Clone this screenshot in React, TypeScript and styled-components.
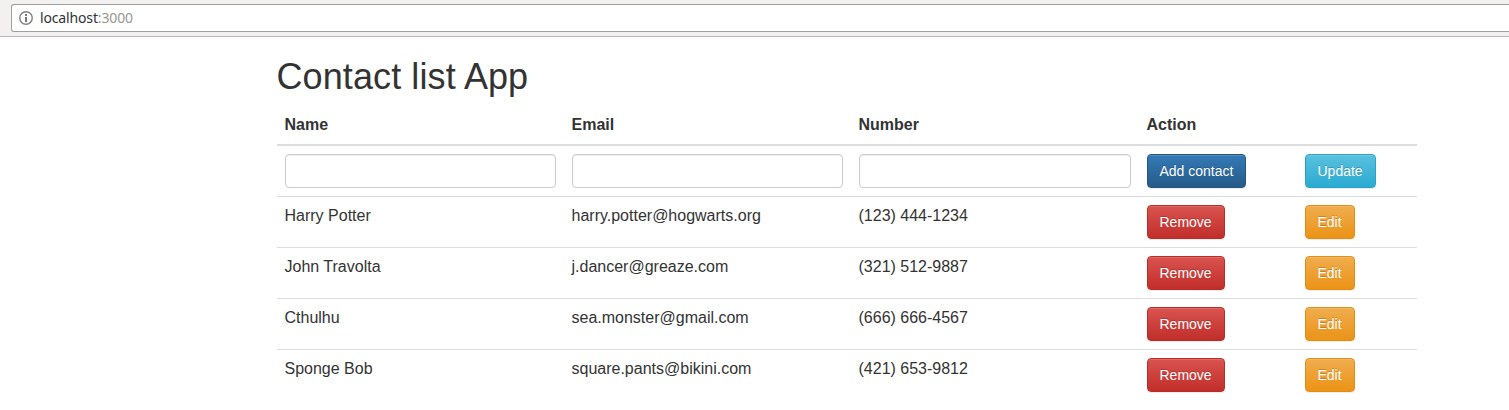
import React from "react";
import styled, { createGlobalStyle } from "styled-components";

const GlobalStyle = createGlobalStyle`
  *, *::before, *::after { box-sizing: border-box; }
  html, body { margin: 0; background: #fff; }
  body {
    height: 410px;
    overflow: hidden;
    font-family: "Liberation Sans", Arial, sans-serif;
    font-size: 16px;
    line-height: 22px;
    color: #333;
  }
`;

const BrowserBar = styled.div`
  height: 37px;
  padding: 4px 0 0 11px;
  background: #f2f1f0;
  border-bottom: 1px solid #b6b6bb;
`;

const AddressField = styled.div`
  display: flex;
  align-items: center;
  height: 28px;
  padding-left: 7px;
  background: #fff;
  border: 1px solid #a0a0a0;
  border-right: 0;
  border-radius: 3px 0 0 3px;
`;

const InfoIcon = styled.svg`
  display: block;
  width: 14px;
  height: 14px;
  margin-right: 7px;
`;

const Address = styled.span`
  font-family: "Noto Sans", sans-serif;
  font-size: 14px;
  line-height: 20px;
  letter-spacing: -0.15px;
  color: #2e3436;
`;

const Port = styled.span`
  color: #9a9690;
`;

const Container = styled.main`
  width: 1140px;
  margin-left: 276.5px;
  padding-top: 20px;
`;

const Title = styled.h1`
  margin: 0 0 10px;
  font-size: 36px;
  font-weight: 500;
  line-height: 39px;
  letter-spacing: 0.1px;
`;

const Table = styled.table`
  width: 100%;
  table-layout: fixed;
  border-collapse: separate;
  border-spacing: 0;
`;

const Column = styled.col<{ $width: number }>`
  width: ${({ $width }) => $width}px;
`;

const HeaderCell = styled.th`
  height: 40px;
  padding: 8px;
  text-align: left;
  vertical-align: bottom;
  border-bottom: 2px solid #ddd;
`;

const Row = styled.tr`
  & + & > td {
    border-top: 1px solid #ddd;
  }
`;

const Cell = styled.td`
  padding: 8px;
  vertical-align: top;
`;

const TextInput = styled.input`
  display: block;
  width: 100%;
  height: 34px;
  padding: 6px 12px;
  font: inherit;
  font-size: 14px;
  color: #555;
  background: #fff;
  border: 1px solid #ccc;
  border-radius: 4px;
  box-shadow: inset 0 1px 1px rgba(0, 0, 0, 0.075);
`;

type Tone = "primary" | "info" | "danger" | "warning";

const tones: Record<Tone, [string, string, string]> = {
  primary: ["#337ab7", "#265a88", "#245580"],
  info: ["#5bc0de", "#2aabd2", "#28a4c9"],
  danger: ["#d9534f", "#c12e2a", "#b92c28"],
  warning: ["#f0ad4e", "#eb9316", "#e38d13"],
};

const Button = styled.button<{ $tone: Tone }>`
  display: block;
  height: 34px;
  padding: 6px 12px;
  font-family: inherit;
  font-size: 14px;
  line-height: 20px;
  white-space: nowrap;
  color: #fff;
  text-shadow: 0 -1px 0 rgba(0, 0, 0, 0.2);
  background: linear-gradient(
    to bottom,
    ${({ $tone }) => tones[$tone][0]} 0%,
    ${({ $tone }) => tones[$tone][1]} 100%
  ) repeat-x;
  border: 1px solid ${({ $tone }) => tones[$tone][2]};
  border-radius: 4px;
  box-shadow: inset 0 1px 0 rgba(255, 255, 255, 0.15), 0 1px 1px rgba(0, 0, 0, 0.075);
  cursor: pointer;
`;

const contacts = [
  { name: "Harry Potter", email: "harry.potter@hogwarts.org", number: "(123) 444-1234" },
  { name: "John Travolta", email: "j.dancer@greaze.com", number: "(321) 512-9887" },
  { name: "Cthulhu", email: "sea.monster@gmail.com", number: "(666) 666-4567" },
  { name: "Sponge Bob", email: "square.pants@bikini.com", number: "(421) 653-9812" },
];

export default function App() {
  return (
    <>
      <GlobalStyle />
      <BrowserBar>
        <AddressField>
          <InfoIcon viewBox="0 0 14 14" aria-hidden="true">
            <circle cx="7" cy="7" r="6.25" fill="none" stroke="#808080" strokeWidth="1.4" />
            <rect x="6" y="3" width="2" height="2" fill="#777" />
            <rect x="6" y="6" width="2" height="5" fill="#777" />
          </InfoIcon>
          <Address>
            localhost<Port>:3000</Port>
          </Address>
        </AddressField>
      </BrowserBar>
      <Container>
        <Title>Contact list App</Title>
        <Table>
          <colgroup>
            <Column $width={287} />
            <Column $width={287} />
            <Column $width={288} />
            <Column $width={158} />
            <Column $width={120} />
          </colgroup>
          <thead>
            <tr>
              <HeaderCell>Name</HeaderCell>
              <HeaderCell>Email</HeaderCell>
              <HeaderCell>Number</HeaderCell>
              <HeaderCell>Action</HeaderCell>
              <HeaderCell />
            </tr>
          </thead>
          <tbody>
            <Row>
              <Cell><TextInput aria-label="Name" /></Cell>
              <Cell><TextInput aria-label="Email" /></Cell>
              <Cell><TextInput aria-label="Number" /></Cell>
              <Cell><Button $tone="primary">Add contact</Button></Cell>
              <Cell><Button $tone="info">Update</Button></Cell>
            </Row>
            {contacts.map((contact) => (
              <Row key={contact.email}>
                <Cell>{contact.name}</Cell>
                <Cell>{contact.email}</Cell>
                <Cell>{contact.number}</Cell>
                <Cell><Button $tone="danger">Remove</Button></Cell>
                <Cell><Button $tone="warning">Edit</Button></Cell>
              </Row>
            ))}
          </tbody>
        </Table>
      </Container>
    </>
  );
}
